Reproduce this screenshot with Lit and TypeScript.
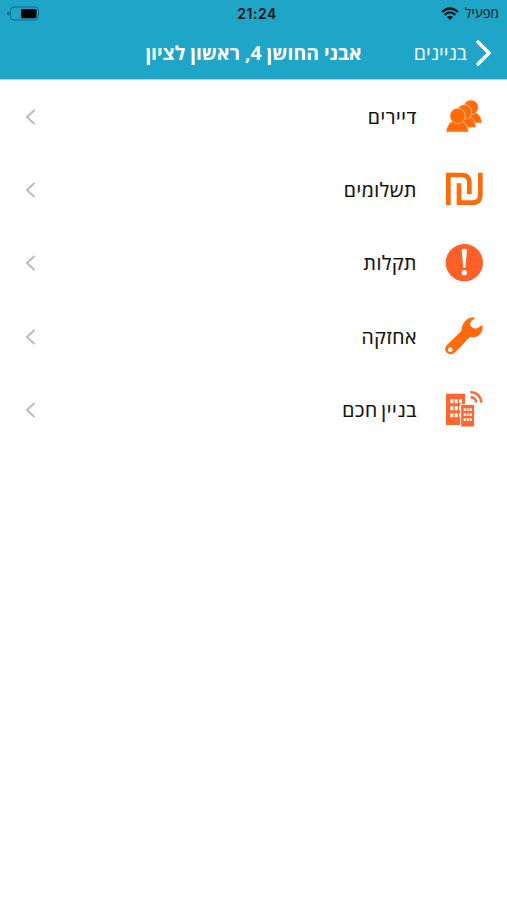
import { LitElement, html, svg, css } from "lit";
import { customElement } from "lit/decorators.js";

const icons = {
  tenants: svg`<g transform="translate(0 10)" fill="#ff6a0a" stroke="#ffd9bd" stroke-width="2">
    <path d="M78 98Q84 62 108 62Q138 66 141 98Z"/><circle cx="108" cy="51" r="22"/>
    <path d="M58 111Q62 74 88 76Q120 78 123 111Z"/><circle cx="88" cy="65" r="22"/>
    <path d="M33 125C36 106 46 89 67 89S98 106 101 125Z"/><circle cx="68" cy="77" r="23"/></g>`,
  payments: svg`<g fill="none" stroke="#ff6a0a" stroke-width="14">
    <path d="M40 135V45H80Q103 45 103 67V103"/><path d="M72 70V128H111Q136 128 136 104V38"/></g>`,
  faults: svg`<g transform="translate(0 7)"><circle cx="88" cy="82" r="56" fill="#ff6028"/>
    <path d="M80 44Q80 40 88 40T96 44L91 98H85Z" fill="#fff"/><circle cx="88" cy="112" r="8" fill="#fff"/></g>`,
  maintenance: svg`<path transform="translate(0 4)" fill="#ff6a0a" fill-rule="evenodd"
    d="M36 110L79 68C80 45 96 27 115 27C120 27 119 31 116 33C106 39 103 46 107 53C112 61 123 63 132 57L138 52Q143 49 143 54C144 76 127 92 105 85L62 130C54 140 40 139 34 132C28 125 29 117 36 110ZM46 117a7 7 0 1 0 0 14a7 7 0 1 0 0-14Z"/>`,
  smart: svg`<path fill="#ff6630" d="M33 41H90V135H33Z"/>
    <path fill="#fff" d="M46 58h9v12h-9zM59 58h9v12h-9zM72 58h9v12h-9zM46 79h9v12h-9zM59 79h9v12h-9zM72 79h9v12h-9zM46 100h9v12h-9zM59 100h9v12h-9zM72 100h9v12h-9z"/>
    <path fill="#ff6630" stroke="#fff" stroke-width="3" d="M77 73H119V141H77Z"/>
    <path fill="#fff" d="M86 85h6v8h-6zM95 85h6v8h-6zM104 85h6v8h-6zM86 100h6v8h-6zM95 100h6v8h-6zM104 100h6v8h-6zM86 115h6v8h-6zM95 115h6v8h-6zM104 115h6v8h-6z"/>
    <path fill="none" stroke="#ff6630" stroke-width="7" d="M106 36Q136 38 139 68M107 51Q122 53 124 67"/>`,
};

const items = [
  { label: "דיירים", icon: icons.tenants },
  { label: "תשלומים", icon: icons.payments },
  { label: "תקלות", icon: icons.faults },
  { label: "אחזקה", icon: icons.maintenance },
  { label: "בניין חכם", icon: icons.smart },
];

@customElement("app-root")
export class AppRoot extends LitElement {
  static styles = css`
    :host { display: block; height: 900px; background: #fff; direction: rtl; overflow: hidden;
      font-family: "Open Sans", "Liberation Sans", sans-serif; color: #111; }
    header { background: #1fa5c8; border-bottom: 1px solid #a5dae9; box-sizing: border-box; height: 80px; }
    .status { display: grid; grid-template-columns: 1fr auto 1fr; align-items: center; height: 27px; padding: 0 8px 0 7px; }
    .carrier { display: flex; align-items: center; gap: 6px; font-size: 13.5px; font-weight: 500; line-height: 27px; }
    .time { font: 600 14px/27px Inter, sans-serif; letter-spacing: 0.5px; direction: ltr; margin: 0 -4px 0 4px; }
    .battery { justify-self: end; }
    .nav { display: grid; grid-template-columns: 130px 1fr 130px; height: 52px; align-items: center; }
    .back { display: flex; align-items: center; gap: 8px; padding-right: 15px; color: #fff; font-size: 19.5px; line-height: 52px; white-space: nowrap; }
    .title { margin: 0; color: #fff; text-align: center; font-size: 19.4px; font-weight: 700; line-height: 52px; white-space: nowrap; }
    .row { display: flex; align-items: center; height: 73.3px; padding: 0 12px 0 25px; }
    .label { flex: 1; margin-right: 18px; font-size: 19.4px; font-weight: 500; letter-spacing: 0.6px; word-spacing: -2px; line-height: 26px; color: #111; -webkit-text-stroke: 0.2px #111; }
    svg { display: block; flex: none; }
  `;

  render() {
    return html`
      <header>
        <div class="status">
          <div class="carrier"><span>מפעיל</span>
            <svg width="18" height="13" viewBox="0 0 18 13" fill="none" stroke="#061115" stroke-width="2.3">
              <path d="M1 5Q9-2 17 5M3.7 7.8Q9 3 14.3 7.8"/><path d="M6 10Q9 7.3 12 10L9 13Z" fill="#061115" stroke="none"/>
            </svg>
          </div>
          <div class="time">21:24</div>
          <svg class="battery" width="32" height="15" viewBox="0 0 32 15">
            <rect x="3.5" y="1" width="28" height="13" rx="3.5" fill="none" stroke="#126d85"/>
            <path d="M2.5 5.2Q0 5.5 0 7.5T2.5 9.8Z" fill="#126d85"/>
            <rect x="14" y="3" width="15.5" height="9.2" rx="1" fill="#000"/>
          </svg>
        </div>
        <div class="nav">
          <div class="back">
            <svg width="17" height="28" viewBox="0 0 17 28" fill="none" stroke="#fff" stroke-width="3.5" stroke-linecap="round" stroke-linejoin="round"><path d="M3 3L14 14L3 25"/></svg>
            <span>בניינים</span>
          </div>
          <h1 class="title">אבני החושן 4, ראשון לציון</h1>
        </div>
      </header>
      <main>
        ${items.map((item) => html`
          <div class="row">
            <svg width="60" height="60" viewBox="0 0 180 180">${item.icon}</svg>
            <span class="label">${item.label}</span>
            <svg width="11" height="18" viewBox="0 0 11 18" fill="none" stroke="#bcbcbe" stroke-width="2"><path d="M9.5 2L2 9L9.5 16"/></svg>
          </div>`)}
      </main>
    `;
  }
}
